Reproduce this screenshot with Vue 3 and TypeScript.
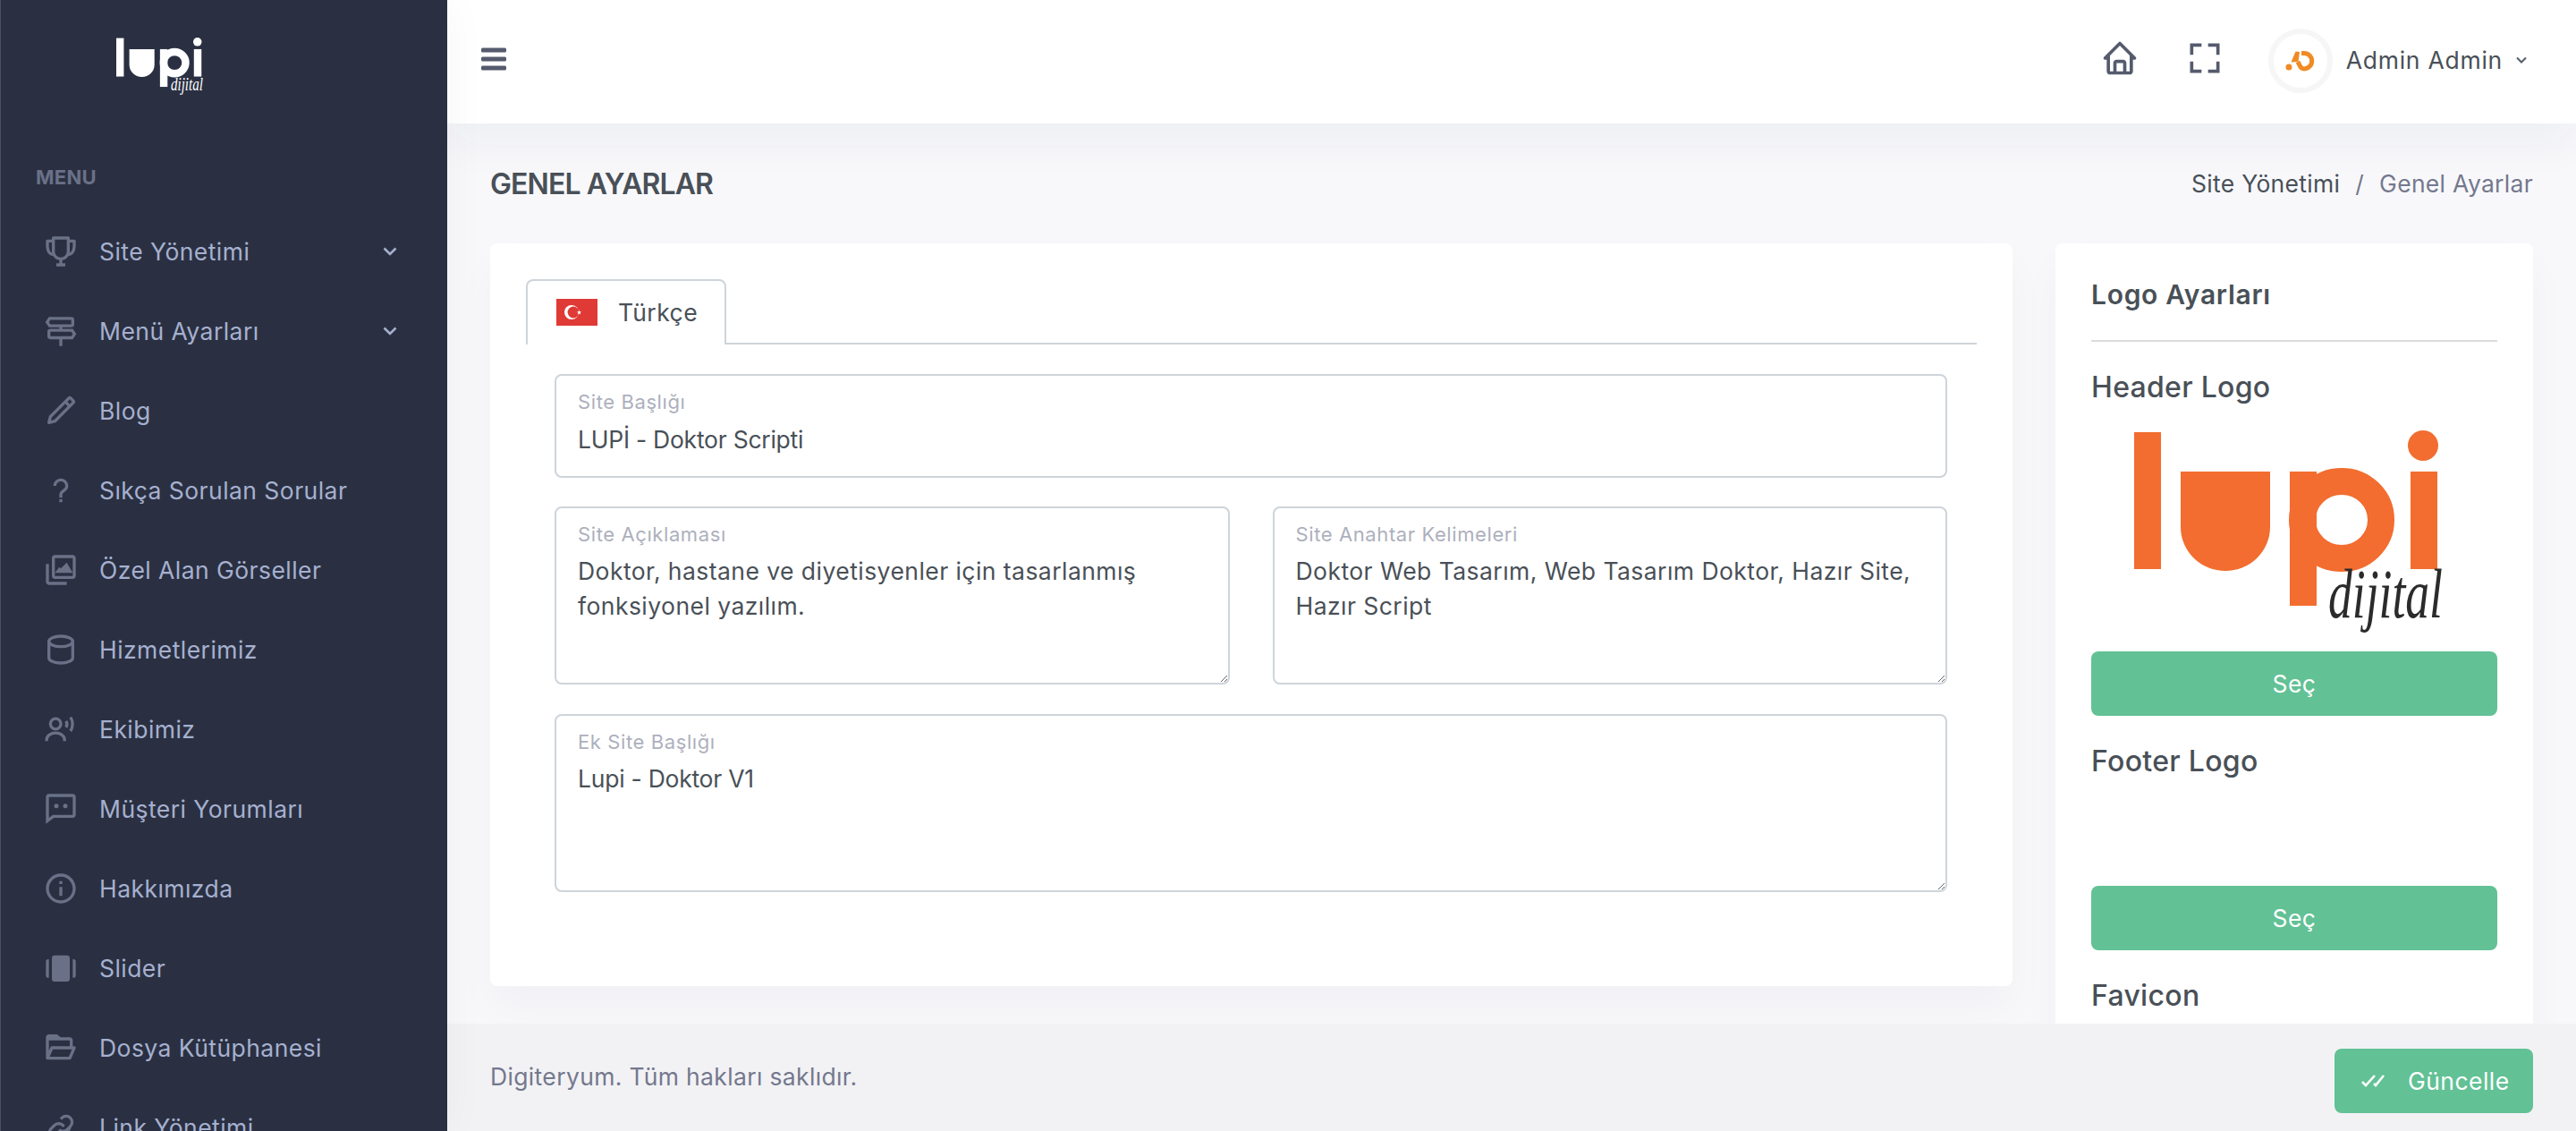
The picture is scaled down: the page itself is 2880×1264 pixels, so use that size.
<template>
  <div class="layout">
    <aside class="sidebar">
      <div class="brand">
        <svg class="brand-logo" viewBox="0 0 356 242" width="100" height="68">
          <rect x="0" y="2" width="30" height="153" fill="#fff" />
          <path d="M52 46h100v62a50 49 0 0 1-100 0z" fill="#fff" />
          <rect x="174" y="46" width="30" height="150" fill="#fff" />
          <ellipse cx="232" cy="100" rx="44" ry="43" fill="none" stroke="#fff" stroke-width="30" />
          <rect x="309" y="46" width="30" height="109" fill="#fff" />
          <circle cx="323" cy="17" r="17" fill="#fff" />
          <text class="script" x="217" y="209" font-size="78" textLength="128" lengthAdjust="spacingAndGlyphs" fill="#fff">dijital</text>
        </svg>
      </div>
      <div class="menu-title">MENU</div>
      <ul class="menu">
        <li v-for="item in menu" :key="item.label" class="menu-item">
          <svg class="menu-icon" viewBox="0 0 24 24" width="40" height="40">
            <path :d="item.d" :class="item.stroke ? 'line' : 'solid'" />
          </svg>
          <span class="menu-label">{{ item.label }}</span>
          <svg v-if="item.arrow" class="menu-arrow" viewBox="0 0 16 10" width="16" height="10">
            <path d="M1.5 1.5 8 8l6.5-6.5" />
          </svg>
        </li>
      </ul>
    </aside>

    <div class="main">
      <header class="topbar">
        <svg class="bars" viewBox="0 0 28 26" width="28" height="26">
          <rect y="0.5" width="28" height="5" rx="1.5" />
          <rect y="10.5" width="28" height="5" rx="1.5" />
          <rect y="20.5" width="28" height="5" rx="1.5" />
        </svg>
        <div class="top-right">
          <svg class="top-icon" viewBox="0 0 24 24" width="44" height="44">
            <path d="M3 13h1v7c0 1.103.897 2 2 2h12c1.103 0 2-.897 2-2v-7h1a1 1 0 0 0 .707-1.707l-9-9a.999.999 0 0 0-1.414 0l-9 9A1 1 0 0 0 3 13zm7 7v-5h4v5h-4zm2-15.586 6 6V15l.001 5H16v-5c0-1.103-.897-2-2-2h-4c-1.103 0-2 .897-2 2v5H6v-9.586l6-6z" />
          </svg>
          <svg class="top-icon full" viewBox="0 0 24 24" width="44" height="44">
            <path d="M5 5h5V3H3v7h2zm5 14H5v-5H3v7h7zm11-5h-2v5h-5v2h7zm-2-4h2V3h-7v2h5z" />
          </svg>
          <div class="avatar">
            <svg viewBox="0 0 34 27" width="34" height="27">
              <circle cx="4" cy="20" r="3.5" fill="#f08a24" />
              <path d="M11.5 2.5 16 3l-1.5 11-8 .5z" fill="#f08a24" />
              <path d="M18 4.5h3a8.7 8.7 0 0 1 0 17.4c-2 0-3.500-1-4.500-3L14 14" fill="none" stroke="#f08a24" stroke-width="5" />
            </svg>
          </div>
          <span class="user-name">Admin Admin</span>
          <svg class="user-arrow" viewBox="0 0 12 8" width="12" height="8">
            <path d="M1 1.500 6 6.500l5-5" />
          </svg>
        </div>
      </header>

      <div class="content">
        <div class="page-head">
          <h1 class="page-title">GENEL AYARLAR</h1>
          <div class="crumbs">
            <span class="crumb-link">Site Yönetimi</span>
            <span class="crumb-sep">/</span>
            <span class="crumb-current">Genel Ayarlar</span>
          </div>
        </div>

        <div class="columns">
          <section class="card form-card">
            <div class="tabs">
              <div class="tab">
                <svg viewBox="0 0 46 30" width="46" height="30">
                  <rect width="46" height="30" fill="#e03a36" />
                  <circle cx="17" cy="15" r="8" fill="#fff" />
                  <circle cx="19" cy="15" r="6.4" fill="#e03a36" />
                  <path d="m25.500 12.500.7 1.800 1.900.1-1.500 1.200.5 1.900-1.600-1.100-1.600 1.100.5-1.900-1.500-1.200 1.900-.1z" fill="#fff" />
                </svg>
                <span>Türkçe</span>
              </div>
            </div>
            <div class="form-grid">
              <label class="field wide">
                <span class="field-label">Site Başlığı</span>
                <input class="field-input short" :value="siteTitle" readonly />
              </label>
              <label class="field">
                <span class="field-label">Site Açıklaması</span>
                <textarea class="field-input area" :value="siteDescription" readonly></textarea>
              </label>
              <label class="field">
                <span class="field-label">Site Anahtar Kelimeleri</span>
                <textarea class="field-input area" :value="siteKeywords" readonly></textarea>
              </label>
              <label class="field wide extra">
                <span class="field-label">Ek Site Başlığı</span>
                <textarea class="field-input area short" :value="extraTitle" readonly></textarea>
              </label>
            </div>
          </section>

          <section class="card logo-card">
            <h4 class="logo-heading">Logo Ayarları</h4>
            <hr class="logo-rule" />
            <h5 class="logo-name">Header Logo</h5>
            <div class="logo-slot header-slot">
              <svg viewBox="0 0 356 242" width="356" height="242">
                <rect x="0" y="2" width="30" height="153" fill="#f26d2f" />
                <path d="M52 46h100v62a50 49 0 0 1-100 0z" fill="#f26d2f" />
                <rect x="174" y="46" width="30" height="150" fill="#f26d2f" />
                <ellipse cx="232" cy="100" rx="44" ry="43" fill="none" stroke="#f26d2f" stroke-width="30" />
                <rect x="309" y="46" width="30" height="109" fill="#f26d2f" />
                <circle cx="323" cy="17" r="17" fill="#f26d2f" />
                <text class="script" x="217" y="209" font-size="78" textLength="128" lengthAdjust="spacingAndGlyphs" fill="#2b2b2b">dijital</text>
              </svg>
            </div>
            <button class="btn-green wide-btn" type="button">Seç</button>
            <h5 class="logo-name">Footer Logo</h5>
            <div class="logo-slot footer-slot"></div>
            <button class="btn-green wide-btn" type="button">Seç</button>
            <h5 class="logo-name">Favicon</h5>
            <div class="logo-slot footer-slot"></div>
          </section>
        </div>
      </div>

      <footer class="footer">
        <span class="footer-text">Digiteryum. Tüm hakları saklıdır.</span>
        <button class="btn-green save-btn" type="button">
          <svg viewBox="0 0 30 16" width="30" height="16">
            <path d="M3 9l4 4L17 2M16 11l2 2L27 2" />
          </svg>
          Güncelle
        </button>
      </footer>
    </div>
  </div>
</template>

<script setup lang="ts">
interface MenuItem {
  label: string;
  d: string;
  stroke?: boolean;
  arrow?: boolean;
}

const siteTitle = 'LUPİ - Doktor Scripti';
const siteDescription = 'Doktor, hastane ve diyetisyenler için tasarlanmış fonksiyonel yazılım.';
const siteKeywords = 'Doktor Web Tasarım, Web Tasarım Doktor, Hazır Site, Hazır Script';
const extraTitle = 'Lupi - Doktor V1';

const menu: MenuItem[] = [
  {
    label: 'Site Yönetimi',
    arrow: true,
    d: 'M21 4h-3V3a1 1 0 0 0-1-1H7a1 1 0 0 0-1 1v1H3a1 1 0 0 0-1 1v3c0 4.31 1.799 6.91 4.819 7.012A6.001 6.001 0 0 0 11 17.91V20H9v2h6v-2h-2v-2.090a6.010 6.010 0 0 0 4.181-2.898C20.201 14.910 22 12.310 22 8V5a1 1 0 0 0-1-1zM4 8V6h2v6.830C4.216 12.078 4 9.299 4 8zm8 8c-2.206 0-4-1.794-4-4V4h8v8c0 2.206-1.794 4-4 4zm6-3.170V6h2v2c0 1.299-.216 4.078-2 4.830z',
  },
  {
    label: 'Menü Ayarları',
    arrow: true,
    stroke: true,
    d: 'M4.500 3.500H19a1 1 0 0 1 1 1v3a1 1 0 0 1-1 1H4.500L2.800 6zM5 11.500h14.500L21.200 14l-1.700 2.500H5a1 1 0 0 1-1-1v-3a1 1 0 0 1 1-1zM12 8.500v3M12 16.500v5.500',
  },
  {
    label: 'Blog',
    d: 'M4 21a1 1 0 0 0 .24 0l4-1a1 1 0 0 0 .47-.26L21 7.410a2 2 0 0 0 0-2.820L19.420 3a2 2 0 0 0-2.830 0L4.300 15.290a1.060 1.060 0 0 0-.27.47l-1 4A1 1 0 0 0 3.760 21 .97.97 0 0 0 4 21zM18 4.410 19.590 6 18 7.590 16.420 6zM5.910 16.510 15 7.410 16.590 9l-9.100 9.100-2.110.52z',
  },
  {
    label: 'Sıkça Sorulan Sorular',
    d: 'M12 4C9.243 4 7 6.243 7 9h2c0-1.654 1.346-3 3-3s3 1.346 3 3c0 1.069-.454 1.465-1.481 2.255-.382.294-.813.626-1.226 1.038C10.981 13.604 10.995 14.897 11 15v2h2v-2.009c0-.024.023-.601.707-1.284.32-.32.682-.598 1.031-.867C15.798 12.024 17 11.100 17 9c0-2.757-2.243-5-5-5zm-1 14h2v2h-2z',
  },
  {
    label: 'Özel Alan Görseller',
    d: 'M20 2H8c-1.103 0-2 .897-2 2v12c0 1.103.897 2 2 2h12c1.103 0 2-.897 2-2V4c0-1.103-.897-2-2-2zM8 16V4h12l.002 12H8zM4 8H2v12c0 1.103.897 2 2 2h12v-2H4V8zm8 3-1-1-3 4h12l-4-7z',
  },
  {
    label: 'Hizmetlerimiz',
    stroke: true,
    d: 'M20 6.500c0 1.900-3.600 3.500-8 3.500S4 8.400 4 6.500 7.600 3 12 3s8 1.600 8 3.500zM4 6.500v11C4 19.400 7.600 21 12 21s8-1.600 8-3.500v-11',
  },
  {
    label: 'Ekibimiz',
    stroke: true,
    d: 'M12 8.400a3.500 3.500 0 1 1-7 0 3.500 3.500 0 0 1 7 0zM2.500 20v-1c0-2.600 2.600-4.500 6-4.500s6 1.900 6 4.500v1M15.500 6.500c.8 1.200.8 3 0 4.200M18.500 4c1.800 2.600 1.800 6.600 0 9.200',
  },
  {
    label: 'Müşteri Yorumları',
    d: 'M20 2H4c-1.103 0-2 .897-2 2v18l5.333-4H20c1.103 0 2-.897 2-2V4c0-1.103-.897-2-2-2zm0 14H6.667L4 18V4h16v12zM10.500 10a1.500 1.500 0 1 1-3 0 1.500 1.500 0 0 1 3 0zm6 0a1.500 1.500 0 1 1-3 0 1.500 1.500 0 0 1 3 0z',
  },
  {
    label: 'Hakkımızda',
    d: 'M12 2C6.486 2 2 6.486 2 12s4.486 10 10 10 10-4.486 10-10S17.514 2 12 2zm0 18c-4.411 0-8-3.589-8-8s3.589-8 8-8 8 3.589 8 8-3.589 8-8 8zM11 11h2v6h-2zm0-4h2v2h-2z',
  },
  {
    label: 'Slider',
    d: 'M8 3.500h8a2 2 0 0 1 2 2v13.500a2 2 0 0 1-2 2H8a2 2 0 0 1-2-2V5.500a2 2 0 0 1 2-2zM4 6v12.500H3.500A1.500 1.500 0 0 1 2 17V7.500A1.500 1.500 0 0 1 3.500 6zM20 6h.5A1.500 1.500 0 0 1 22 7.500V17a1.500 1.500 0 0 1-1.500 1.500H20z',
  },
  {
    label: 'Dosya Kütüphanesi',
    d: 'M2.165 19.551c.186.28.499.449.835.449h15c.4 0 .762-.238.919-.606l3-7A.998.998 0 0 0 21 11h-1V7c0-1.103-.897-2-2-2h-6.100L9.616 3.213 9.171 3H4c-1.103 0-2 .897-2 2v14h.007a1 1 0 0 0 .158.551zM17.341 18H4.517l2.143-5h12.824l-2.143 5zM18 7v4H6c-.4 0-.762.238-.919.606L4 14.129V7h14z',
  },
  {
    label: 'Link Yönetimi',
    d: 'M8.465 11.293c1.133-1.133 3.109-1.133 4.242 0l.707.707 1.414-1.414-.707-.707c-.943-.944-2.199-1.465-3.535-1.465s-2.592.521-3.535 1.465L4.929 12a5.008 5.008 0 0 0 0 7.071 4.983 4.983 0 0 0 3.535 1.462A4.982 4.982 0 0 0 12 19.071l.707-.707-1.414-1.414-.707.707a3.007 3.007 0 0 1-4.243 0 3.005 3.005 0 0 1 0-4.243l2.122-2.121zM12 4.929l-.707.707 1.414 1.414.707-.707a3.007 3.007 0 0 1 4.243 0 3.005 3.005 0 0 1 0 4.243l-2.122 2.121c-1.133 1.133-3.109 1.133-4.242 0L11.293 13l-1.414 1.414.707.707c.943.944 2.199 1.465 3.535 1.465s2.592-.521 3.535-1.465L19.071 12a5.008 5.008 0 0 0 0-7.071 5.006 5.006 0 0 0-7.071 0z',
  },
];
</script>

<style>
html,
body {
  margin: 0;
  background: #f8f8fb;
}
</style>

<style scoped>
.layout {
  display: flex;
  width: 2880px;
  height: 1264px;
  overflow: hidden;
  font-family: Inter, "Noto Sans", sans-serif;
  font-size: 26.5px;
  letter-spacing: 0.45px;
  color: #495057;
}

.sidebar {
  flex: 0 0 500px;
  box-sizing: border-box;
  height: 1264px;
  overflow: hidden;
  background: #2a3042;
  border-left: 1px solid #4b5060;
  box-shadow: 0 0 48px rgba(18, 38, 63, 0.04);
  position: relative;
  z-index: 3;
}

.brand {
  height: 138px;
  box-sizing: border-box;
  padding: 42px 0 0 129px;
}

.brand-logo {
  display: block;
  overflow: visible;
}

.script {
  font-family: "Liberation Serif", serif;
  font-style: italic;
  letter-spacing: 0;
}

.menu-title {
  padding: 46px 0 24px 39px;
  line-height: 28px;
  font-size: 22px;
  font-weight: 700;
  letter-spacing: 0.3px;
  color: #6a7187;
}

.menu {
  list-style: none;
  margin: 0;
  padding: 0;
}

.menu-item {
  display: flex;
  align-items: center;
  height: 89px;
  padding-left: 47px;
  color: #a6b0cf;
}

.menu-label {
  margin-left: 23px;
}

.menu-icon path.solid {
  fill: #6a7187;
}

.menu-icon path.line {
  fill: none;
  stroke: #6a7187;
  stroke-width: 2;
}

.menu-arrow {
  margin-left: auto;
  margin-right: 56px;
}

.menu-arrow path {
  fill: none;
  stroke: #a6b0cf;
  stroke-width: 2.600;
}

.main {
  flex: 1;
  min-width: 0;
  display: flex;
  flex-direction: column;
}

.topbar {
  flex: 0 0 138px;
  box-sizing: border-box;
  display: flex;
  align-items: center;
  justify-content: space-between;
  padding: 0 55px 4px 38px;
  background: #fff;
  box-shadow: 0 24px 48px rgba(18, 38, 63, 0.045);
  position: relative;
  z-index: 2;
}

.bars {
  margin-bottom: 2px;
  fill: #555b6d;
}

.top-right {
  display: flex;
  align-items: center;
}

.top-icon {
  margin-bottom: 5px;
  fill: #555b6d;
}

.full {
  margin-left: 51px;
}

.avatar {
  box-sizing: border-box;
  width: 72px;
  height: 72px;
  margin-top: 2px;
  margin-left: 49px;
  border: 6px solid #f6f6f6;
  border-radius: 50%;
  display: flex;
  align-items: center;
  justify-content: center;
}

.user-name {
  margin-left: 15px;
  letter-spacing: 0.75px;
}

.user-arrow {
  margin-left: 15px;
}

.user-arrow path {
  fill: none;
  stroke: #555b6d;
  stroke-width: 2;
}

.content {
  flex: 1;
  min-height: 0;
  overflow: hidden;
  padding: 0 48px;
}

.page-head {
  height: 134px;
  display: flex;
  align-items: center;
  justify-content: space-between;
}

.page-title {
  margin: 0;
  font-size: 32px;
  font-weight: 600;
  letter-spacing: -0.9px;
  color: #495057;
}

.crumbs {
  display: flex;
  gap: 17px;
  letter-spacing: 0.3px;
}

.crumb-sep,
.crumb-current {
  color: #74788d;
}

.columns {
  display: grid;
  grid-template-columns: 1fr 534px;
  gap: 48px;
  align-items: start;
}

.card {
  background: #fff;
  border-radius: 8px;
  box-shadow: 0 24px 48px rgba(18, 38, 63, 0.03);
}

.form-card {
  height: 830px;
  box-sizing: border-box;
  padding: 40px;
}

.tabs {
  height: 73px;
  box-sizing: border-box;
  border-bottom: 2px solid #ced4da;
}

.tab {
  display: inline-flex;
  align-items: center;
  gap: 23px;
  box-sizing: border-box;
  width: 224px;
  height: 73px;
  padding: 0 0 2px 32px;
  background: #fff;
  border: 2px solid #ced4da;
  border-bottom: 0;
  border-radius: 8px 8px 0 0;
}

.form-grid {
  display: grid;
  grid-template-columns: 1fr 1fr;
  gap: 32px 48px;
  padding: 33px 33px 0 32px;
}

.field {
  position: relative;
  display: block;
}

.wide {
  grid-column: 1 / 3;
}

.extra {
  margin-top: 1px;
}

.field-label {
  position: absolute;
  left: 26px;
  top: 17px;
  line-height: 28px;
  font-size: 22px;
  letter-spacing: 0.6px;
  color: #adb0bd;
}

.field-input {
  display: block;
  box-sizing: border-box;
  width: 100%;
  height: 116px;
  margin: 0;
  padding: 51px 24px 22px;
  font: inherit;
  letter-spacing: inherit;
  line-height: 39px;
  color: #495057;
  background: #fff;
  border: 2px solid #ced4da;
  border-radius: 8px;
  outline: none;
}

.area {
  height: 199px;
  padding-bottom: 0;
  resize: both;
}

.short {
  letter-spacing: -0.25px;
}

.logo-card {
  height: 1000px;
  padding: 32px 40px 0;
  box-sizing: border-box;
}

.logo-heading {
  margin: 0;
  line-height: 50px;
  font-size: 30px;
  font-weight: 600;
  letter-spacing: 0.7px;
}

.logo-rule {
  margin: 26px 0 0;
  border: 0;
  border-top: 2px solid #dcdcdc;
}

.logo-name {
  margin: 26px 0 0;
  line-height: 50px;
  font-size: 32px;
  font-weight: 500;
  letter-spacing: 0.3px;
}

.logo-slot svg {
  display: block;
  overflow: visible;
}

.header-slot {
  height: 270px;
  box-sizing: border-box;
  padding: 23px 0 0 48px;
}

.footer-slot {
  height: 114px;
}

.btn-green {
  font: inherit;
  letter-spacing: inherit;
  color: #fff;
  background: #62c195;
  border: 0;
  border-radius: 8px;
}

.wide-btn {
  display: block;
  width: 100%;
  height: 72px;
}

.footer {
  flex: 0 0 120px;
  display: flex;
  align-items: center;
  justify-content: space-between;
  padding: 0 48px;
  background: #f2f2f5;
  position: relative;
  z-index: 1;
}

.footer-text {
  margin-bottom: 2px;
  letter-spacing: 0.35px;
  color: #74788d;
}

.save-btn {
  display: flex;
  align-items: center;
  gap: 24px;
  box-sizing: border-box;
  width: 222px;
  height: 72px;
  margin-top: 8px;
  padding-left: 28px;
}

.save-btn path {
  fill: none;
  stroke: #fff;
  stroke-width: 2.600;
}
</style>
